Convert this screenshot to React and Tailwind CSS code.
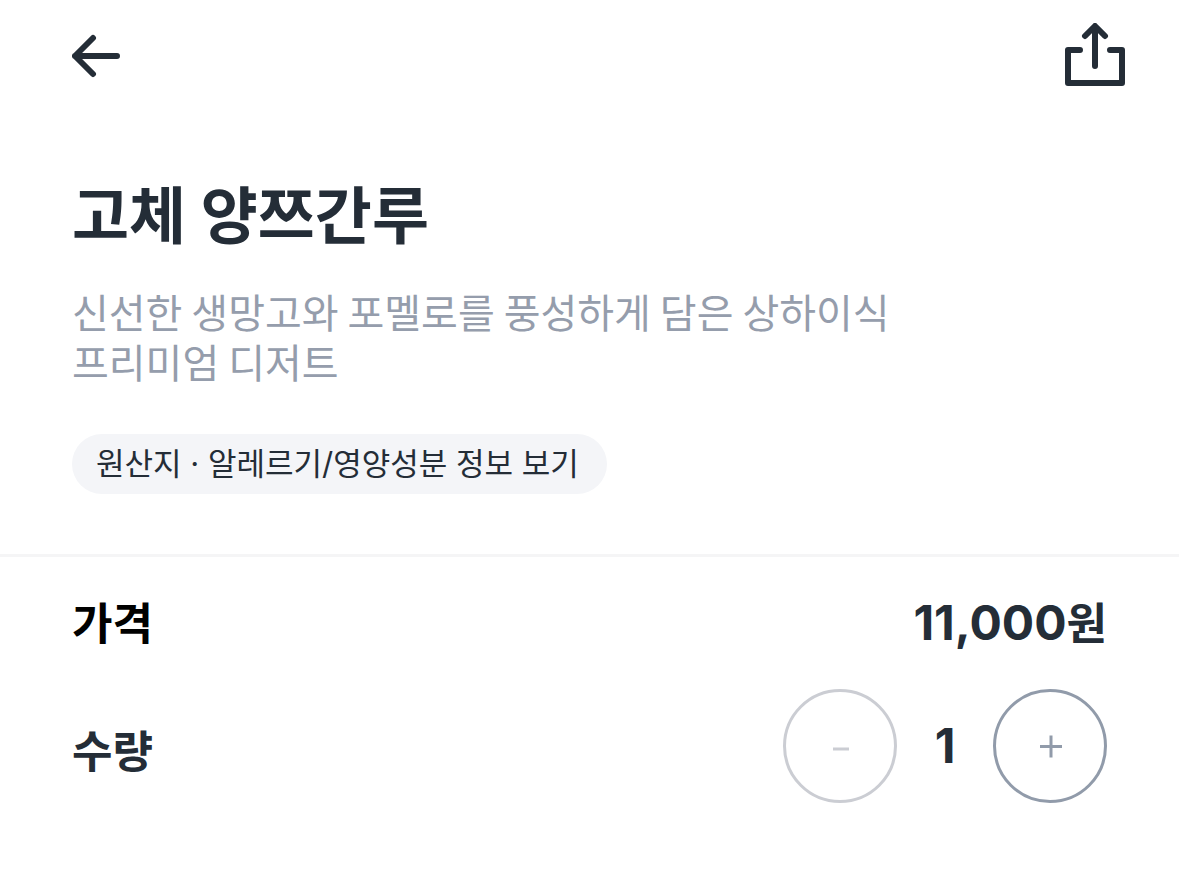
import React, { useState } from "react";

const PRICE = 11000;

function BackIcon() {
  return (
    <svg width="50" height="44" viewBox="0 0 50 44" fill="none" stroke="currentColor" strokeWidth="6" strokeLinecap="round" strokeLinejoin="round" aria-hidden="true">
      <path d="M45 22H3M21 4 3 22l18 18" />
    </svg>
  );
}

function ShareIcon() {
  return (
    <svg width="62" height="64" viewBox="0 0 62 64" fill="none" stroke="currentColor" strokeWidth="6" strokeLinecap="round" strokeLinejoin="round" aria-hidden="true">
      <path d="M16 27H4v33h54V27H46M31 43V4M21 13 31 3l10 10" />
    </svg>
  );
}

function QuantityStepper({ value, onChange }) {
  return (
    <div className="flex items-center">
      <button
        type="button"
        aria-label="수량 줄이기"
        disabled={value <= 1}
        onClick={() => onChange(value - 1)}
        className="flex size-[114px] items-center justify-center rounded-full border-3 border-[#919baa] text-[#919baa] disabled:border-[#cbcdd3] disabled:text-[#cbcdd3]"
      >
        <svg width="24" height="24" viewBox="0 0 24 24" stroke="currentColor" strokeWidth="3" aria-hidden="true">
          <path d="M5 15h16" />
        </svg>
      </button>
      <output className="w-24 text-center text-5xl font-bold">{value}</output>
      <button
        type="button"
        aria-label="수량 늘리기"
        onClick={() => onChange(value + 1)}
        className="flex size-[114px] items-center justify-center rounded-full border-3 border-[#919baa] text-[#919baa]"
      >
        <svg width="24" height="24" viewBox="0 0 24 24" stroke="currentColor" strokeWidth="3" aria-hidden="true">
          <path d="M2 12.500h22M13 1.500v22" />
        </svg>
      </button>
    </div>
  );
}

export default function App() {
  const [quantity, setQuantity] = useState(1);

  return (
    <div className="bg-white pb-16 font-['Inter','Noto_Sans_CJK_KR',sans-serif] text-[#242d37]">
      <header className="flex items-start justify-between pt-[23px] pr-[53px] pl-[72px]">
        <button type="button" aria-label="뒤로" className="pt-[11px]">
          <BackIcon />
        </button>
        <button type="button" aria-label="공유">
          <ShareIcon />
        </button>
      </header>

      <section className="px-[72px] pt-[86px] pb-[60px]">
        <h1 className="text-[62px] leading-[88px] font-bold">고체 양쯔간루</h1>
        <p className="mt-[25px] max-w-[900px] font-['Noto_Sans_CJK_KR',sans-serif] text-[40px] leading-[50px] break-keep text-[#959dac]">
          신선한 생망고와 포멜로를 풍성하게 담은 상하이식 프리미엄 디저트
        </p>
        <button type="button" className="mt-12 h-[60px] rounded-full bg-[#f4f5f8] pr-7 pl-6 text-[31px]">
          원산지 · 알레르기/영양성분 정보 보기
        </button>
      </section>

      <section className="border-t-3 border-[#f5f5f6] px-[72px] pt-9">
        <div className="flex items-center justify-between leading-[60px]">
          <h2 className="text-[44px] font-bold text-black">가격</h2>
          <p className="text-5xl leading-[60px] font-bold">
            {PRICE.toLocaleString("ko-KR")}
            <span className="text-[44px]">원</span>
          </p>
        </div>
        <div className="mt-[35px] flex items-center justify-between">
          <h2 className="pt-3 text-[44px] leading-[60px] font-bold">수량</h2>
          <QuantityStepper value={quantity} onChange={setQuantity} />
        </div>
      </section>
    </div>
  );
}
